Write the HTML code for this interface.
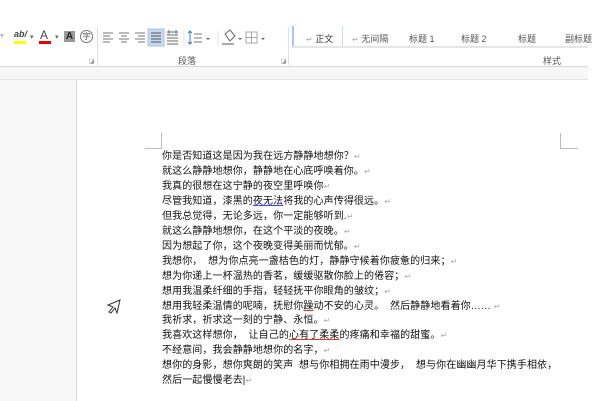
<!DOCTYPE html>
<html><head><meta charset="utf-8"><style>
*{margin:0;padding:0}
body{width:600px;height:401px;overflow:hidden;background:#fff;position:relative;font-family:"Liberation Sans","Noto Sans CJK SC",sans-serif}
.a{position:absolute}
.t{font-size:10px;letter-spacing:0.1px;color:#111;white-space:nowrap;line-height:14.95px}
.r{color:#aaa;font-size:8px}
.g{font-size:9px;color:#555;white-space:nowrap}
</style></head><body>
<div class="a" style="left:0;top:66px;width:588px;height:1px;background:#d8d8d8"></div>
<div class="a" style="left:0;top:67px;width:588px;height:12px;background:#f7f7f7"></div>
<div class="a" style="left:0;top:79px;width:588px;height:1px;background:#e3e3e3"></div>
<div class="a" style="left:0;top:80px;width:77px;height:321px;background:#f8f8f8"></div>
<div class="a" style="left:76px;top:80px;width:1px;height:321px;background:#d8d8d8"></div>
<div class="a" style="left:97px;top:27px;width:1px;height:38px;background:#e0e0e0"></div>
<div class="a" style="left:288px;top:27px;width:1px;height:38px;background:#e0e0e0"></div>
<div class="a" style="left:0;top:31px;color:#bbb;font-size:8px">▾</div>
<div class="a" style="left:14px;top:29px;font-size:9px;color:#444;font-style:italic;font-weight:bold">ab/</div>
<div class="a" style="left:14px;top:41px;width:12px;height:3px;background:#ff0"></div>
<div class="a" style="left:30px;top:33px;color:#666;font-size:7px">▾</div>
<div class="a" style="left:40px;top:28px;font-size:12px;color:#444">A</div>
<div class="a" style="left:39px;top:41px;width:12px;height:3px;background:#e00"></div>
<div class="a" style="left:55px;top:33px;color:#666;font-size:7px">▾</div>
<div class="a" style="left:64px;top:31px;width:11px;height:11px;background:#999;color:#222;font-size:10px;text-align:center;line-height:11px;font-weight:bold">A</div>
<div class="a" style="left:80px;top:30px;width:11px;height:11px;border:1px solid #777;border-radius:50%;font-size:8px;text-align:center;line-height:11px;color:#555">字</div>
<svg class="a" style="left:100px;top:28px" width="190" height="20">
<g stroke="#777" stroke-width="1">
<path d="M3 5h10M3 8h7M3 11h10M3 14h7"/>
<path d="M19 5h10M21 8h6M19 11h10M21 14h6"/>
<path d="M35 5h10M38 8h7M35 11h10M38 14h7"/>
</g>
<rect x="48" y="1" width="16" height="17" fill="#c5d9f1" stroke="#a8c4e6"/>
<g stroke="#555"><path d="M51 5h10M51 8h10M51 11h10M51 14h10"/></g>
<g stroke="#666"><path d="M67 4h11M67 7h11M67 10h11M67 13h11M67 16h11"/><path d="M69 2v4M76 2v4" stroke="#3b7bd6"/></g>
<path d="M84 2v16" stroke="#e0e0e0"/>
<path d="M90 3v13" stroke="#3b7bd6"/><path d="M88 5l2-2 2 2M88 14l2 2 2-2" stroke="#3b7bd6" fill="none"/>
<g stroke="#777"><path d="M94 6h8M94 10h8M94 14h8"/></g>
<path d="M106 10l2 2 2-2" fill="#666"/>
<path d="M118 2v16" stroke="#e0e0e0"/>
<path d="M125 6l5-4 5 6-5 5z" fill="none" stroke="#666"/><rect x="122" y="15" width="12" height="2" fill="#aaa"/>
<path d="M138 10l2 2 2-2" fill="#666"/>
<rect x="146" y="4" width="11" height="11" fill="none" stroke="#aaa"/><path d="M151.5 4v11M146 9.5h11" stroke="#aaa"/>
<path d="M161 10l2 2 2-2" fill="#666"/>
</svg>
<div class="a g" style="left:178px;top:54px">段落</div>
<div class="a" style="left:89px;top:58px;font-size:6px;color:#999">◪</div>
<div class="a" style="left:281px;top:58px;font-size:6px;color:#999">◪</div>
<div class="a" style="left:292px;top:26px;width:2px;height:20px;background:#a9c7ee"></div>
<div class="a" style="left:342px;top:26px;width:1px;height:20px;background:#c8d9f0"></div>
<div class="a" style="left:292px;top:46px;width:296px;height:2px;background:#e6e6e6"></div>
<div class="a g" style="left:306px;top:32px;color:#333"><span class="r">↵</span> 正文</div>
<div class="a g" style="left:352px;top:32px"><span class="r">↵</span> 无间隔</div>
<div class="a g" style="left:409px;top:32px">标题 1</div>
<div class="a g" style="left:461px;top:32px">标题 2</div>
<div class="a g" style="left:518px;top:32px">标题</div>
<div class="a g" style="left:565px;top:32px">副标题</div>
<div class="a g" style="left:543px;top:54px">样式</div>
<div class="a" style="left:161px;top:133px;width:1px;height:16px;background:#bbb"></div>
<div class="a" style="left:145px;top:148px;width:17px;height:1px;background:#bbb"></div>
<div class="a" style="left:560px;top:133px;width:1px;height:16px;background:#bbb"></div>
<div class="a" style="left:560px;top:148px;width:18px;height:1px;background:#bbb"></div>
<svg class="a" style="left:106px;top:298px" width="16" height="16"><path d="M14 2L2 7l5 2-4 5 2 1 4-5 2 5z" fill="none" stroke="#333"/></svg>
<div class="a t" style="left:162px;top:150px">
你是否知道这是因为我在远方静静地想你？<span class="r">↵</span><br>
就这么静静地想你，静静地在心底呼唤着你。<span class="r">↵</span><br>
我真的很想在这宁静的夜空里呼唤你<span class="r">↵</span><br>
尽管我知道，漆黑的<u style="text-decoration-color:#44f">夜无法</u>将我的心声传得很远。<span class="r">↵</span><br>
但我总觉得，无论多远，你一定能够听到.<span class="r">↵</span><br>
就这么静静地想你，在这个平淡的夜晚。<span class="r">↵</span><br>
因为想起了你，这个夜晚变得美丽而忧郁。<span class="r">↵</span><br>
我想你，&nbsp;&nbsp;想为你点亮一盏桔色的灯，静静守候着你疲惫的归来；<span class="r">↵</span><br>
想为你递上一杯温热的香茗，缓缓驱散你脸上的倦容；<span class="r">↵</span><br>
想用我温柔纤细的手指，轻轻抚平你眼角的皱纹；<span class="r">↵</span><br>
想用我轻柔温情的呢喃，抚慰你<u style="text-decoration-color:#e33">躁</u>动不安的心灵。&nbsp;&nbsp;然后静静地看着你……&nbsp;<span class="r">↵</span><br>
我祈求，祈求这一刻的宁静、永恒。<span class="r">↵</span><br>
我喜欢这样想你，&nbsp;&nbsp;让自己的<u style="text-decoration-color:#e33">心有了柔柔</u>的疼痛和幸福的甜蜜。<span class="r">↵</span><br>
不经意间，我会静静地想你的名字，<span class="r">↵</span><br>
想你的身影，想你爽朗的笑声&nbsp;&nbsp;想与你相拥在雨中漫步，&nbsp;&nbsp;想与你在幽幽月华下携手相依，<br>
然后一起慢慢老去|<span class="r">↵</span>
</div>
</body></html>
